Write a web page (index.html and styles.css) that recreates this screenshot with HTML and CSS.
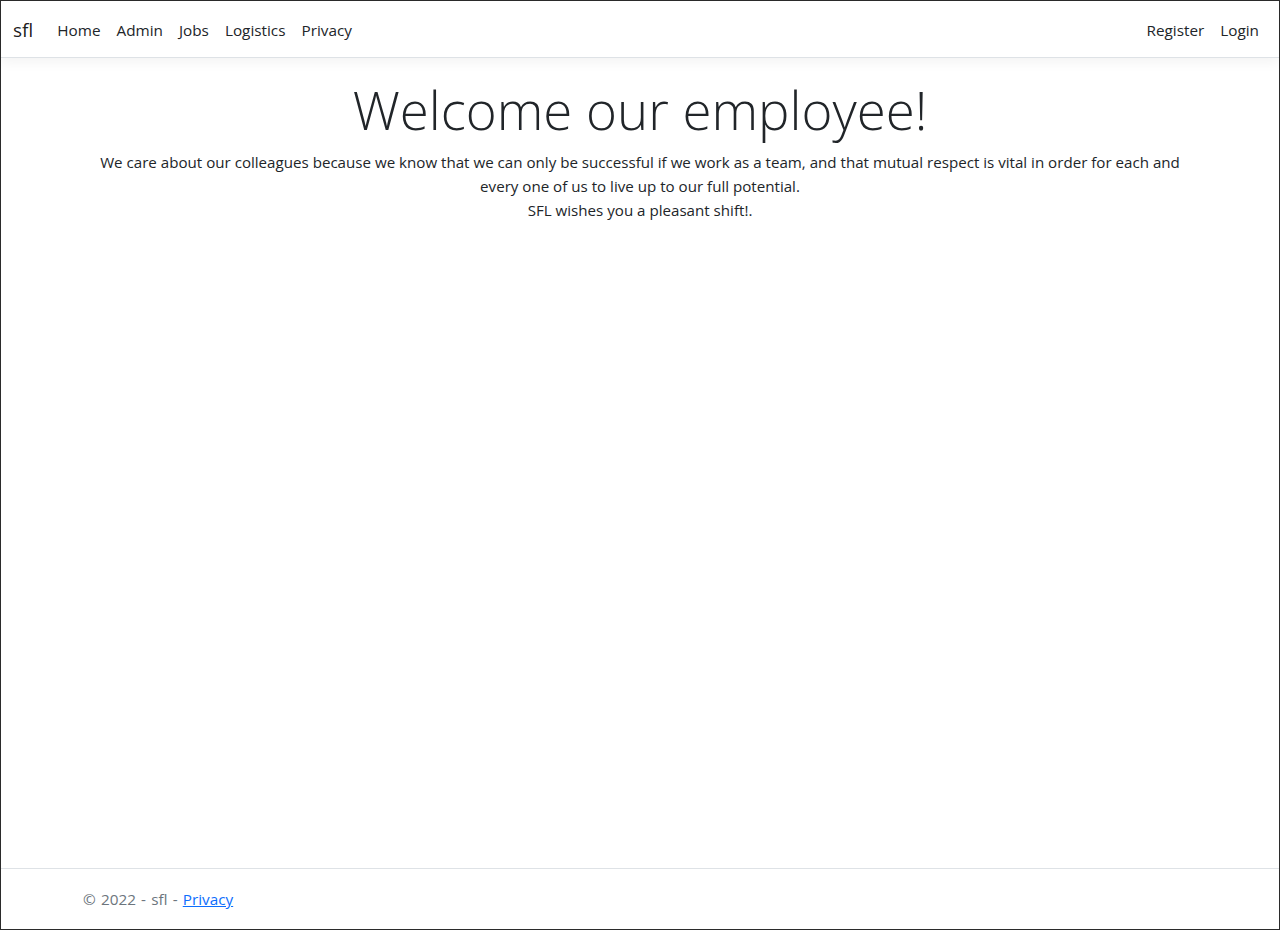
FILE: index.html
```html
<!DOCTYPE html>
<html lang="en">
<head>
<meta charset="utf-8">
<title>Home Page - sfl</title>
<link rel="stylesheet" href="styles.css">
</head>
<body>
<div class="frame">
  <header class="navbar">
    <div class="nav-container">
      <a class="brand" href="#">sfl</a>
      <ul class="nav nav-main">
        <li><a class="nav-link" href="#">Home</a></li>
        <li><a class="nav-link" href="#">Admin</a></li>
        <li><a class="nav-link" href="#">Jobs</a></li>
        <li><a class="nav-link" href="#">Logistics</a></li>
        <li><a class="nav-link" href="#">Privacy</a></li>
      </ul>
      <ul class="nav nav-auth">
        <li><a class="nav-link" href="#">Register</a></li>
        <li><a class="nav-link" href="#">Login</a></li>
      </ul>
    </div>
  </header>
  <main class="container main">
    <div class="welcome">
      <h1 class="display">Welcome our employee!</h1>
      <p class="lead-text">We care about our colleagues because we know that we can only be successful if we work as a team, and that mutual respect is vital in order for each and every one of us to live up to our full potential.<br>SFL wishes you a pleasant shift!.</p>
    </div>
  </main>
  <footer class="footer">
    <div class="container footer-inner">
      &copy; 2022 - sfl - <a href="#" class="footer-link">Privacy</a>
    </div>
  </footer>
</div>
</body>
</html>
```
FILE: styles.css
```css
* { box-sizing: border-box; }
html, body { margin: 0; padding: 0; }
body {
  font-family: "Open Sans", "Noto Sans", sans-serif;
  font-size: 15.3px;
  line-height: 24px;
  color: #212529;
  background: #fff;
}
.frame {
  height: 930px;
  border: 1px solid #2b2b2b;
  display: flex;
  flex-direction: column;
}
.navbar {
  background: #fff;
  border-bottom: 1px solid #dee2e6;
  box-shadow: 0 4px 12px rgba(0,0,0,.05);
  padding: 9px 0 7px;
  margin-bottom: 16px;
}
.nav-container {
  display: flex;
  align-items: center;
  padding: 0 12px;
}
.brand {
  font-size: 19px;
  line-height: 30px;
  padding: 5px 0;
  margin-right: 16px;
  color: rgba(0,0,0,.9);
  text-decoration: none;
}
.nav {
  display: flex;
  list-style: none;
  margin: 0;
  padding: 0;
}
.nav-main { flex: 1; }
.nav-link {
  display: block;
  padding: 8px;
  color: #212529;
  text-decoration: none;
}
.container {
  width: 1140px;
  margin: 0 auto;
  padding: 0 12px;
}
.main { flex: 1; padding-top: 2px; }
.welcome { text-align: center; }
.display {
  font-size: 52.8px;
  font-weight: 300;
  line-height: 67.2px;
  margin: 0 0 7px;
}
.lead-text { margin: 0 0 16px; font-size: 15.13px; }
.footer {
  border-top: 1px solid #dee2e6;
  color: #6c757d;
  line-height: 60px;
  white-space: nowrap;
}
.footer-inner { padding-left: 13px; word-spacing: 1.2px; }
.footer-link { color: #0d6efd; }
```
